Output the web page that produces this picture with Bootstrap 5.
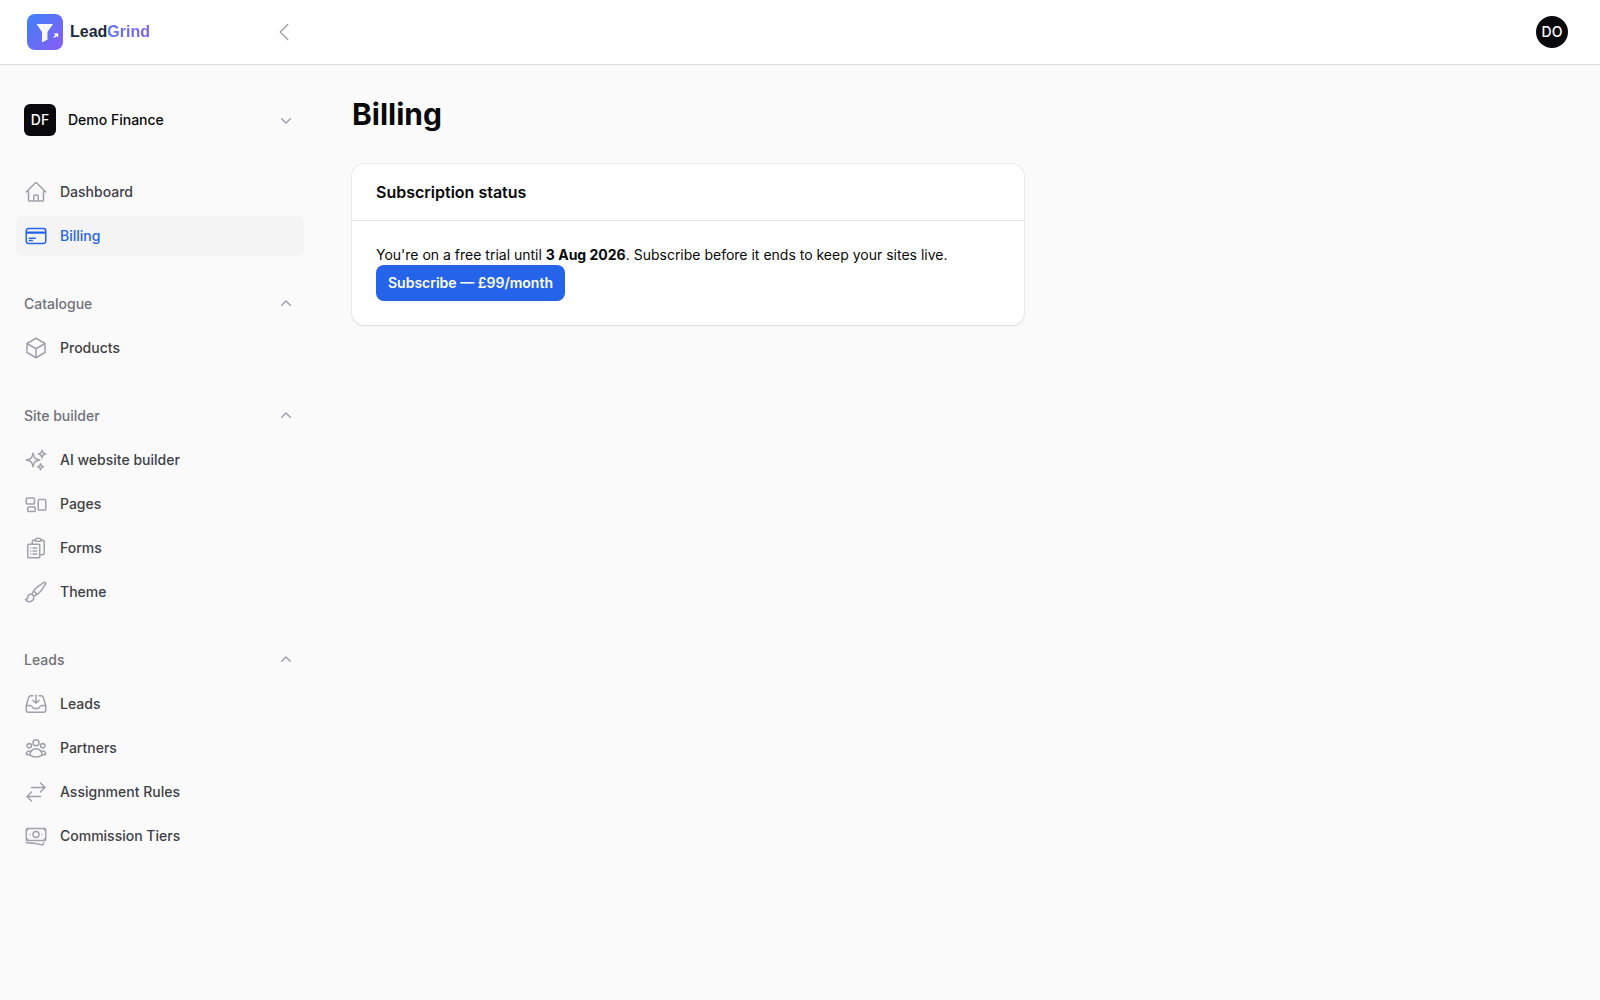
<!DOCTYPE html>
<html lang="en">
<head>
<meta charset="utf-8">
<meta name="viewport" content="width=device-width, initial-scale=1">
<title>Billing - LeadGrind</title>
<link href="https://cdn.jsdelivr.net/npm/bootstrap@5.3.0/dist/css/bootstrap.min.css" rel="stylesheet">
<style>
  body { font-family: Inter, "Noto Sans", sans-serif; font-size: 14px; line-height: 20px; color: #09090b; background: #fafafa; }
  a { text-decoration: none; }
  .plain { border: 0; background: none; padding: 0; color: inherit; }
  .topbar { height: 64px; padding-right: 32px; background: #fff; box-shadow: 0 0 0 1px rgba(9,9,11,.05), 0 1px 2px rgba(0,0,0,.08); }
  .topbar-start { width: 320px; padding: 0 24px; }
  .brand-mark { width: 40px; height: 40px; }
  .wordmark { font-family: "Liberation Sans", Arial, sans-serif; font-size: 16px; font-weight: 700; line-height: 24px; color: #1e293b; margin-left: 6px; }
  .wordmark span { background: linear-gradient(90deg, #5b76f6, #7a60f6); background-clip: text; -webkit-background-clip: text; color: transparent; }
  .tile { width: 32px; height: 32px; background: #09090b; color: #fff; font-weight: 500; }
  .tile-square { border-radius: 6px; }
  .side { width: 320px; padding: 32px 16px; }
  .side-groups, .side-list { display: flex; flex-direction: column; gap: 28px; }
  .side-list { gap: 4px; }
  .side .nav-link { display: flex; align-items: center; gap: 12px; padding: 8px; border-radius: 8px; font-weight: 500; line-height: 24px; color: #3f3f46; }
  .side .nav-link.active { background: #f4f4f5; color: #2563eb; }
  .ico { width: 24px; height: 24px; flex: none; fill: none; stroke: #a1a1aa; stroke-width: 1.5; stroke-linecap: round; stroke-linejoin: round; }
  .active .ico { stroke: #2563eb; }
  .chev { width: 20px; height: 20px; flex: none; fill: #a1a1aa; }
  .tenant { padding: 6px 8px; margin-bottom: 30px; font-weight: 500; gap: 12px; }
  .tenant-row { padding-top: 2px; }
  .group-toggle { padding: 8px; font-weight: 500; line-height: 24px; color: #71717a; }
  .page { padding: 32px; }
  .page h1 { font-size: 30px; line-height: 36px; font-weight: 700; margin-bottom: 32px; }
  .panel { max-width: 672px; border: 0; border-radius: 12px; background: #fff; color: inherit; box-shadow: 0 0 0 1px rgba(9,9,11,.05), 0 1px 2px rgba(0,0,0,.08); }
  .panel-title { padding: 16px 24px; border-bottom: 1px solid #e4e4e7; font-size: 16px; line-height: 24px; font-weight: 600; }
  .btn-subscribe { --bs-btn-bg: #2563eb; --bs-btn-color: #fff; --bs-btn-hover-bg: #3b82f6; --bs-btn-hover-color: #fff; border: 0; border-radius: 8px; padding: 8px 12px; font-size: 14px; line-height: 20px; font-weight: 600; }
</style>
<script src="https://cdn.jsdelivr.net/npm/bootstrap@5.3.0/dist/js/bootstrap.bundle.min.js"></script>
</head>
<body>
<header class="topbar d-flex align-items-center justify-content-between position-relative">
  <div class="topbar-start d-flex align-items-center justify-content-between">
    <a href="#" class="d-flex align-items-center">
      <svg class="brand-mark" viewBox="0 0 40 40" aria-hidden="true">
        <defs><linearGradient id="mark" x1="0" y1="0" x2="1" y2="1"><stop offset="0" stop-color="#3b82f6"/><stop offset="1" stop-color="#8b5cf6"/></linearGradient></defs>
        <rect x="3" y="2" width="36" height="36" rx="8" fill="url(#mark)"/>
        <path d="M12.5 12H29l-5.500 8v7.500l-5.500 3V20z" fill="#fff" fill-opacity=".95"/>
        <path d="M30 25.500l3.500-3.500M30.500 22h3v3" fill="none" stroke="#fff" stroke-width="1.300"/>
      </svg>
      <span class="wordmark">Lead<span>Grind</span></span>
    </a>
    <button type="button" class="plain" aria-label="Collapse sidebar"><svg class="ico d-block" viewBox="0 0 24 24"><path d="M15.750 19.500 8.250 12l7.500-7.500"/></svg></button>
  </div>
  <button type="button" class="plain tile rounded-circle">DO</button>
</header>

<div class="d-flex">
  <aside class="side flex-shrink-0">
    <div class="tenant-row">
      <button type="button" class="plain tenant d-flex align-items-center w-100 text-start">
        <span class="tile tile-square d-flex align-items-center justify-content-center">DF</span>
        <span class="flex-grow-1">Demo Finance</span>
        <svg class="chev" viewBox="0 0 20 20"><path d="M5.220 8.220a.75.75 0 0 1 1.060 0L10 11.940l3.720-3.720a.75.75 0 1 1 1.060 1.060l-4.250 4.250a.75.75 0 0 1-1.060 0L5.220 9.280a.75.75 0 0 1 0-1.060Z"/></svg>
      </button>
    </div>
    <nav class="side-groups" aria-label="Main">
      <div class="side-list">
        <a class="nav-link" href="#"><svg class="ico" viewBox="0 0 24 24"><path d="m2.25 12 8.954-8.955c.44-.439 1.152-.439 1.591 0L21.75 12M4.5 9.75v10.125c0 .621.504 1.125 1.125 1.125H9.750v-4.875c0-.621.504-1.125 1.125-1.125h2.250c.621 0 1.125.504 1.125 1.125V21h4.125c.621 0 1.125-.504 1.125-1.125V9.750M8.250 21h8.250"/></svg>Dashboard</a>
        <a class="nav-link active" aria-current="page" href="#"><svg class="ico" viewBox="0 0 24 24"><path d="M2.25 8.25h19.5M2.25 9h19.5m-16.500 5.250h6m-6 2.250h3m-3.750 3h15a2.250 2.250 0 0 0 2.250-2.250V6.750A2.250 2.250 0 0 0 19.500 4.500h-15a2.250 2.250 0 0 0-2.250 2.250v10.500A2.250 2.250 0 0 0 4.500 19.500Z"/></svg>Billing</a>
      </div>
      <div class="side-list">
        <button type="button" class="plain group-toggle d-flex align-items-center justify-content-between" aria-expanded="true">Catalogue<svg class="chev" viewBox="0 0 20 20"><path d="M9.470 6.470a.75.75 0 0 1 1.060 0l4.250 4.250a.75.75 0 1 1-1.060 1.060L10 8.060l-3.720 3.720a.75.75 0 0 1-1.060-1.060l4.250-4.250Z"/></svg></button>
        <a class="nav-link" href="#"><svg class="ico" viewBox="0 0 24 24"><path d="m21 7.5-9-5.25L3 7.5m18 0-9 5.25m9-5.25v9l-9 5.25M3 7.5l9 5.25M3 7.5v9l9 5.25m0-9v9"/></svg>Products</a>
      </div>
      <div class="side-list">
        <button type="button" class="plain group-toggle d-flex align-items-center justify-content-between" aria-expanded="true">Site builder<svg class="chev" viewBox="0 0 20 20"><path d="M9.470 6.470a.75.75 0 0 1 1.060 0l4.250 4.250a.75.75 0 1 1-1.060 1.060L10 8.060l-3.720 3.720a.75.75 0 0 1-1.060-1.060l4.250-4.250Z"/></svg></button>
        <a class="nav-link" href="#"><svg class="ico" viewBox="0 0 24 24"><path d="M9.813 15.904 9 18.75l-.813-2.846a4.5 4.5 0 0 0-3.09-3.09L2.25 12l2.846-.813a4.5 4.5 0 0 0 3.09-3.09L9 5.25l.813 2.846a4.5 4.5 0 0 0 3.09 3.09L15.75 12l-2.846.813a4.5 4.5 0 0 0-3.09 3.09ZM18.259 8.715 18 9.75l-.259-1.035a3.375 3.375 0 0 0-2.455-2.456L14.25 6l1.036-.259a3.375 3.375 0 0 0 2.455-2.456L18 2.25l.259 1.035a3.375 3.375 0 0 0 2.456 2.456L21.75 6l-1.035.259a3.375 3.375 0 0 0-2.456 2.456ZM16.894 20.567 16.5 21.75l-.394-1.183a2.25 2.25 0 0 0-1.423-1.423L13.5 18.75l1.183-.394a2.25 2.25 0 0 0 1.423-1.423l.394-1.183.394 1.183a2.25 2.25 0 0 0 1.423 1.423l1.183.394-1.183.394a2.25 2.25 0 0 0-1.423 1.423Z"/></svg>AI website builder</a>
        <a class="nav-link" href="#"><svg class="ico" viewBox="0 0 24 24"><path d="M2.25 7.125C2.25 6.504 2.754 6 3.375 6h6c.621 0 1.125.504 1.125 1.125v3.75c0 .621-.504 1.125-1.125 1.125h-6a1.125 1.125 0 0 1-1.125-1.125v-3.75ZM14.25 8.625c0-.621.504-1.125 1.125-1.125h5.25c.621 0 1.125.504 1.125 1.125v8.25c0 .621-.504 1.125-1.125 1.125h-5.25a1.125 1.125 0 0 1-1.125-1.125v-8.25ZM3.75 16.125c0-.621.504-1.125 1.125-1.125h5.25c.621 0 1.125.504 1.125 1.125v2.25c0 .621-.504 1.125-1.125 1.125h-5.25a1.125 1.125 0 0 1-1.125-1.125v-2.25Z"/></svg>Pages</a>
        <a class="nav-link" href="#"><svg class="ico" viewBox="0 0 24 24"><path d="M9 12h3.75M9 15h3.75M9 18h3.75m3 .75H18a2.25 2.25 0 0 0 2.25-2.25V6.108c0-1.135-.845-2.098-1.976-2.192a48.424 48.424 0 0 0-1.123-.08m-5.801 0c-.065.21-.1.433-.1.664 0 .414.336.75.75.75h4.5a.75.75 0 0 0 .75-.75 2.25 2.25 0 0 0-.1-.664m-5.8 0A2.251 2.251 0 0 1 13.5 2.25H15c1.012 0 1.867.668 2.15 1.586m-5.8 0c-.376.023-.75.05-1.124.08C9.095 4.01 8.25 4.973 8.25 6.108V8.25m0 0H4.875c-.621 0-1.125.504-1.125 1.125v11.25c0 .621.504 1.125 1.125 1.125h9.75c.621 0 1.125-.504 1.125-1.125V9.375c0-.621-.504-1.125-1.125-1.125H8.25ZM6.75 12h.008v.008H6.75V12Zm0 3h.008v.008H6.75V15Zm0 3h.008v.008H6.75V18Z"/></svg>Forms</a>
        <a class="nav-link" href="#"><svg class="ico" viewBox="0 0 24 24"><path d="M9.53 16.122a3 3 0 0 0-5.78 1.128 2.25 2.25 0 0 1-2.4 2.245 4.5 4.5 0 0 0 8.4-2.245c0-.399-.078-.78-.22-1.128Zm0 0a15.998 15.998 0 0 0 3.388-1.62m-5.043-.025a15.994 15.994 0 0 1 1.622-3.395m3.42 3.42a15.995 15.995 0 0 0 4.764-4.648l3.876-5.814a1.151 1.151 0 0 0-1.597-1.597L14.146 6.32a15.996 15.996 0 0 0-4.649 4.763m3.42 3.42a6.776 6.776 0 0 0-3.42-3.42"/></svg>Theme</a>
      </div>
      <div class="side-list">
        <button type="button" class="plain group-toggle d-flex align-items-center justify-content-between" aria-expanded="true">Leads<svg class="chev" viewBox="0 0 20 20"><path d="M9.470 6.470a.75.75 0 0 1 1.060 0l4.250 4.250a.75.75 0 1 1-1.060 1.060L10 8.060l-3.720 3.720a.75.75 0 0 1-1.060-1.060l4.250-4.250Z"/></svg></button>
        <a class="nav-link" href="#"><svg class="ico" viewBox="0 0 24 24"><path d="M9 3.75H6.912a2.25 2.25 0 0 0-2.15 1.588L2.35 13.177a2.25 2.25 0 0 0-.1.661V18a2.25 2.25 0 0 0 2.25 2.25h15A2.25 2.25 0 0 0 21.75 18v-4.162c0-.224-.034-.447-.1-.661L19.24 5.338a2.25 2.25 0 0 0-2.15-1.588H15M2.25 13.5h3.86a2.25 2.25 0 0 1 2.012 1.244l.256.512a2.25 2.25 0 0 0 2.013 1.244h3.218a2.25 2.25 0 0 0 2.013-1.244l.256-.512a2.25 2.25 0 0 1 2.013-1.244h3.859M12 3v8.25m0 0-3-3m3 3 3-3"/></svg>Leads</a>
        <a class="nav-link" href="#"><svg class="ico" viewBox="0 0 24 24"><path d="M18 18.72a9.094 9.094 0 0 0 3.741-.479 3 3 0 0 0-4.682-2.72m.94 3.198.001.031c0 .225-.012.447-.037.666A11.944 11.944 0 0 1 12 21c-2.17 0-4.207-.576-5.963-1.584A6.062 6.062 0 0 1 6 18.719m12 0a5.971 5.971 0 0 0-.941-3.197m0 0A5.995 5.995 0 0 0 12 12.75a5.995 5.995 0 0 0-5.058 2.772m0 0a3 3 0 0 0-4.681 2.72 8.986 8.986 0 0 0 3.74.477m.94-3.197a5.971 5.971 0 0 0-.94 3.197M15 6.75a3 3 0 1 1-6 0 3 3 0 0 1 6 0Zm6 3a2.25 2.25 0 1 1-4.5 0 2.25 2.25 0 0 1 4.5 0Zm-13.5 0a2.25 2.25 0 1 1-4.5 0 2.25 2.25 0 0 1 4.5 0Z"/></svg>Partners</a>
        <a class="nav-link" href="#"><svg class="ico" viewBox="0 0 24 24"><path d="M7.5 21 3 16.5m0 0L7.5 12M3 16.5h13.5m0-13.5L21 7.5m0 0L16.5 12M21 7.5H7.5"/></svg>Assignment Rules</a>
        <a class="nav-link" href="#"><svg class="ico" viewBox="0 0 24 24"><path d="M2.25 18.75a60.07 60.07 0 0 1 15.797 2.101c.727.198 1.453-.342 1.453-1.096V18.75M3.75 4.5v.75A.75.75 0 0 1 3 6h-.75m0 0v-.375c0-.621.504-1.125 1.125-1.125H20.25M2.25 6v9m18-10.5v.75c0 .414.336.75.75.75h.75m-1.5-1.5h.375c.621 0 1.125.504 1.125 1.125v9.75c0 .621-.504 1.125-1.125 1.125h-.375m1.5-1.5H21a.75.75 0 0 0-.75.75v.75m0 0H3.75m0 0h-.375a1.125 1.125 0 0 1-1.125-1.125V15m1.5 1.5v-.75A.75.75 0 0 0 3 15h-.75M15 10.5a3 3 0 1 1-6 0 3 3 0 0 1 6 0Zm3 0h.008v.008H18V10.5Zm-12 0h.008v.008H6V10.5Z"/></svg>Commission Tiers</a>
      </div>
    </nav>
  </aside>
  <main class="page flex-grow-1">
    <h1>Billing</h1>
    <section class="card panel">
      <h2 class="panel-title mb-0">Subscription status</h2>
      <div class="p-4">
        <p class="mb-0">You're on a free trial until <strong>3 Aug 2026</strong>. Subscribe before it ends to keep your sites live.</p>
        <button type="button" class="btn btn-subscribe">Subscribe — £99/month</button>
      </div>
    </section>
  </main>
</div>
</body>
</html>
